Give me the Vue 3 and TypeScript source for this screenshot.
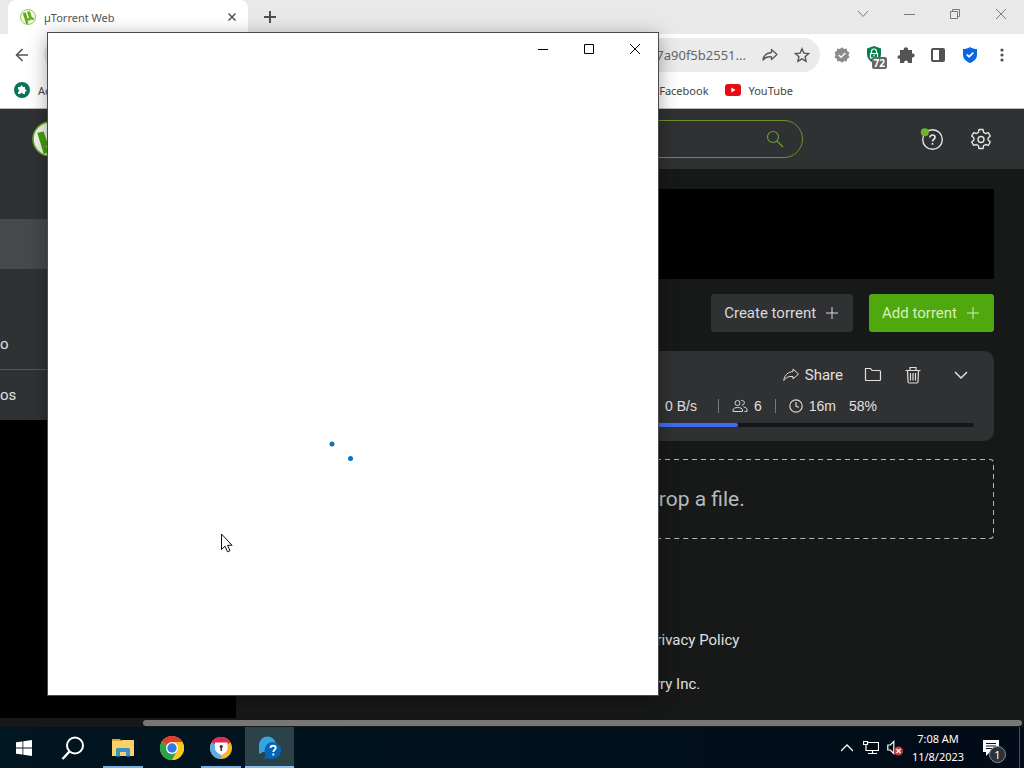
<script setup lang="ts">
import { ref } from 'vue'

interface Task {
  name: string
  label: string
  running?: boolean
  active?: boolean
}

const tasks: Task[] = [
  { name: 'start', label: 'Start' },
  { name: 'search', label: 'Search' },
  { name: 'explorer', label: 'File Explorer', running: true },
  { name: 'chrome', label: 'Google Chrome' },
  { name: 'secure', label: 'Secure browser', running: true },
  { name: 'help', label: 'Help', running: true, active: true },
]

const progress = ref(58)
const query = ref('')
</script>

<template>
  <div class="desktop">
    <div class="browser">
      <header class="tabstrip">
        <div class="tab">
          <svg class="favicon" viewBox="0 0 34 34" aria-hidden="true">
            <circle cx="17" cy="17" r="16" fill="#f3f8e8" stroke="#8cc63f" stroke-width="2" />
            <path d="M6 9l6-2 4 12c1 2 4 1 3-1L15 6l6-1 4 12c1 2 3 2 4 1l1 4c-2 2-5 2-7 0-1 3-5 4-7 2l2 7-5 1z" fill="#62a91d" />
          </svg>
          <span class="tab-title">µTorrent Web</span>
          <button class="bare tab-close" aria-label="Close tab">
            <svg width="10" height="10" viewBox="0 0 10 10"><path d="M1.500 1.500l7 7M8.500 1.500l-7 7" stroke="#555" stroke-width="1.500" /></svg>
          </button>
        </div>
        <button class="bare new-tab" aria-label="New tab">
          <svg width="14" height="14" viewBox="0 0 14 14"><path d="M7 1v12M1 7h12" stroke="#505050" stroke-width="2" /></svg>
        </button>
        <div class="captions">
          <button class="bare caption" aria-label="Search tabs">
            <svg width="12" height="12" viewBox="0 0 12 12" fill="none" stroke="#84757f"><path d="M1 3l5 5.500L11 3" /></svg>
          </button>
          <button class="bare caption" aria-label="Minimize browser">
            <svg width="12" height="12" viewBox="0 0 12 12" fill="none" stroke="#84757f"><path d="M1 6.500h11" /></svg>
          </button>
          <button class="bare caption" aria-label="Restore browser">
            <svg width="12" height="12" viewBox="0 0 12 12" fill="none" stroke="#84757f"><path d="M1.500 3.500h7v7h-7zM3.500 3.500v-2h7v7h-2" /></svg>
          </button>
          <button class="bare caption" aria-label="Close browser">
            <svg width="12" height="12" viewBox="0 0 12 12" fill="none" stroke="#84757f"><path d="M1 1l10 10M11 1L1 11" /></svg>
          </button>
        </div>
      </header>

      <div class="toolbar">
        <button class="bare tool" aria-label="Back">
          <svg width="14" height="14" viewBox="0 0 14 14" fill="none" stroke="#555" stroke-width="1.600"><path d="M13 7H1.500M7.500 1L1.500 7l6 6" /></svg>
        </button>
        <div class="omnibox">
          <span class="url">7a90f5b2551...</span>
          <button class="bare tool" aria-label="Share this page">
            <svg width="16" height="16" viewBox="0 0 16 16" fill="none" stroke="#555" stroke-width="1.300" stroke-linejoin="round"><path d="M9.500 2.500l5.500 5-5.500 5V9.800C5.500 9.500 3 10.500 1 13c.5-4.500 3.500-7 8.500-7.500z" /></svg>
          </button>
          <button class="bare tool" aria-label="Bookmark this page">
            <svg width="16" height="16" viewBox="0 0 16 16" fill="none" stroke="#555" stroke-width="1.400"><path d="M8 1.800l1.900 4.300 4.700.5-3.500 3.100 1 4.600L8 11.900l-4.100 2.400 1-4.600L1.400 6.600l4.700-.5z" /></svg>
          </button>
        </div>
        <div class="extensions">
          <button class="bare tool" aria-label="Verified extension">
            <svg width="16" height="16" viewBox="0 0 16 16"><path d="M8 .3l2.100 1.600 2.600-.4.500 2.600 2.300 1.300L14.400 8l1.100 2.500-2.300 1.300-.5 2.600-2.600-.3L8 15.700l-2.100-1.600-2.600.3-.5-2.600-2.300-1.300L1.600 8 .5 5.400l2.300-1.300.5-2.600 2.600.4z" fill="#8b8b8b" /><path d="M4.800 8l2.300 2.300L11.400 6" fill="none" stroke="#fff" stroke-width="1.500" /></svg>
          </button>
          <button class="bare tool badge-host" aria-label="Privacy extension">
            <svg width="16" height="18" viewBox="0 0 16 18"><path d="M8 0l7 2.500V8c0 5-4 8-7 9.500C5 16 1 13 1 8V2.500z" fill="#087d4c" /><path d="M5.500 7V5.500a2.500 2.500 0 015 0V7M4.500 7.500h7V12h-7z" fill="none" stroke="#fff" stroke-width="1.200" /><path d="M8 8.500v2" stroke="#fff" stroke-width="1.200" /></svg>
            <span class="badge">72</span>
          </button>
          <button class="bare tool" aria-label="Extensions">
            <svg width="18" height="18" viewBox="0 0 18 18"><path d="M3 4h3.800c-1-3.800 5.200-3.800 4.200 0H15v3.600c3.500-.7 3.500 4.500 0 3.800V17h-4c.6-3.500-4.400-3.500-3.800 0H3v-4.200c-3.300.5-3.300-4 0-3.600z" fill="#535353" /></svg>
          </button>
          <button class="bare tool" aria-label="Side panel">
            <svg width="14" height="14" viewBox="0 0 14 14"><rect x="1" y="1" width="12" height="12" rx="1" fill="#fff" stroke="#535353" stroke-width="2" /><path d="M8 1h5v12H8z" fill="#535353" /></svg>
          </button>
          <button class="bare tool" aria-label="Security extension">
            <svg width="16" height="16" viewBox="0 0 16 16"><path d="M8 0c2 1.500 4.500 2 7 2v6c0 4-3.500 6.500-7 8-3.500-1.500-7-4-7-8V2c2.500 0 5-.5 7-2z" fill="#0867e8" /><path d="M4.800 7.500l2.300 2.300 4.200-4.200" fill="none" stroke="#fff" stroke-width="1.800" /></svg>
          </button>
          <button class="bare tool" aria-label="Browser menu">
            <svg width="4" height="14" viewBox="0 0 4 14" fill="#505050"><circle cx="2" cy="2" r="1.600" /><circle cx="2" cy="7" r="1.600" /><circle cx="2" cy="12" r="1.600" /></svg>
          </button>
        </div>
      </div>

      <nav class="bookmarks">
        <a class="bookmark" href="#">
          <svg width="16" height="16" viewBox="0 0 16 16"><circle cx="8" cy="8" r="8" fill="#087555" /><path d="M4 5h2.500c-.3-2 2.500-2 2.200 0H11v2.400c2-.3 2 2.500 0 2.200V12H8.700c.2-1.800-2.400-1.800-2.200 0H4V9.700c1.800.2 1.800-2.500 0-2.300z" fill="#fff" /></svg>
          <span>Ac</span>
        </a>
        <div class="more-bookmarks">
          <a class="bookmark" href="#"><span>Facebook</span></a>
          <a class="bookmark" href="#">
            <svg width="16" height="16" viewBox="0 0 16 16"><rect y="2" width="16" height="12" rx="3" fill="#e60b14" /><path d="M6.300 5.500v5L10.500 8z" fill="#fff" /></svg>
            <span>YouTube</span>
          </a>
        </div>
      </nav>

      <div class="page">
        <aside class="sidebar">
          <div class="brand">
            <svg width="36" height="36" viewBox="0 0 34 34" aria-hidden="true"><circle cx="17" cy="17" r="16" fill="#f3f8ee" stroke="#62a91d" stroke-width="1.500" /><path d="M5 11l6-1 4 12c1 2 4 1 3-1L15 8l5-1 6 16-5 1-1-2c-1 3-5 3-7 1l3 7-5 1z" fill="#4aa010" /></svg>
          </div>
          <nav class="side-nav">
            <a class="side-link selected" href="#" aria-label="Torrents"></a>
            <a class="side-link first" href="#">o</a>
            <a class="side-link" href="#">os</a>
          </nav>
        </aside>

        <main class="main">
          <div class="topbar">
            <label class="search">
              <input v-model="query" type="search" aria-label="Search" />
              <svg width="18" height="18" viewBox="0 0 18 18" fill="none" stroke="#6d9933" stroke-width="1.200"><circle cx="7" cy="7" r="5.500" /><path d="M11 11l6 6" /></svg>
            </label>
            <button class="bare round help" aria-label="Help">
              <svg width="24" height="24" viewBox="0 0 24 24" fill="none" stroke="#e2e3e3" stroke-width="1.400"><circle cx="12.500" cy="12.500" r="9.800" /><path d="M10 10.500c0-3.500 5.200-3.200 5 0-.1 1.800-2.500 1.800-2.500 4M12.500 16v1.700" stroke-width="1.700" /><circle cx="4.800" cy="5.200" r="4" fill="#6cb52c" stroke="none" /></svg>
            </button>
            <button class="bare round" aria-label="Settings">
              <svg width="22" height="22" viewBox="0 0 22 22" fill="none" stroke="#e2e3e3" stroke-width="1.400" stroke-linejoin="round"><circle cx="11" cy="11.500" r="3" /><path d="M9 1.500h4l.6 2.900 2 1.100L18.300 4.600l2 3.500-2.200 2v1.900l2.200 2-2 3.400-2.700-.9-2 1.100-.6 2.900H9l-.6-2.900-2-1.100-2.700.9-2-3.400 2.200-2v-1.900l-2.200-2 2-3.500 2.700.9 2-1.100z" /></svg>
            </button>
          </div>

          <div class="content">
            <div class="banner"></div>
            <div class="actions">
              <button class="action">Create torrent
                <svg width="12" height="12" viewBox="0 0 12 12"><path d="M6 0v12M0 6h12" stroke="currentColor" /></svg>
              </button>
              <button class="action primary">Add torrent
                <svg width="12" height="12" viewBox="0 0 12 12"><path d="M6 0v12M0 6h12" stroke="currentColor" /></svg>
              </button>
            </div>

            <section class="torrent">
              <div class="tools">
                <button class="bare share">
                  <svg width="16" height="14" viewBox="0 0 16 14" fill="none" stroke="#e0e0e0" stroke-linejoin="round"><path d="M10 1l5.500 5-5.500 5V8.500C5.500 8 3 9.500.8 12.500 1.500 7 5 4 10 3.500z" /></svg>
                  Share
                </button>
                <button class="bare icon-tool" aria-label="Open folder">
                  <svg width="18" height="16" viewBox="0 0 18 16" fill="none" stroke="#e0e0e0" stroke-width="1.200"><path d="M1.500 13.500v-12h5l1.500 2h7.500a1 1 0 011 1v8a1 1 0 01-1 1h-13a1 1 0 01-1-1z" /></svg>
                </button>
                <button class="bare icon-tool" aria-label="Delete">
                  <svg width="16" height="18" viewBox="0 0 16 18" fill="none" stroke="#e0e0e0" stroke-width="1.200"><path d="M.5 4.500h15M5 4.500v-3h6v3M2.500 4.500l.5 11c0 1 .5 1.500 1.500 1.500h7c1 0 1.500-.5 1.500-1.500l.5-11M5.500 7v7.500M8 7v7.500M10.500 7v7.500" /></svg>
                </button>
                <button class="bare icon-tool expand" aria-label="Show details">
                  <svg width="14" height="8" viewBox="0 0 14 8" fill="none" stroke="#e0e0e0" stroke-width="1.500"><path d="M1 1l6 6 6-6" /></svg>
                </button>
              </div>
              <div class="stats">
                <span class="speed">0 B/s</span>
                <i class="rule"></i>
                <span class="stat">
                  <svg width="16" height="14" viewBox="0 0 16 14" fill="none" stroke="#d4d4d4"><circle cx="5.500" cy="4" r="2.500" /><path d="M1 12.500V11c0-3.300 9.500-3.300 9.500 0v1.500zM9 1.600c4-1.500 4.500 4.700.8 4.700M11.500 8c2.500.2 3.500 1.200 3.500 3v1.500h-2.500" /></svg>
                  6
                </span>
                <i class="rule"></i>
                <span class="stat">
                  <svg width="14" height="14" viewBox="0 0 14 14" fill="none" stroke="#d4d4d4" stroke-width="1.200"><circle cx="7" cy="7" r="6.200" /><path d="M7 3v4.300l3 1" /></svg>
                  16m
                </span>
                <span>{{ progress }}%</span>
              </div>
              <div class="track" role="progressbar" :aria-valuenow="progress"><div class="fill" :style="{ width: progress + '%' }"></div></div>
            </section>

            <section class="dropzone">
              <svg class="outline" aria-hidden="true"><rect width="100%" height="100%" rx="4" fill="none" stroke="#b4b6b5" stroke-width="2" stroke-dasharray="5 4" /></svg>
              drop a file.
            </section>
            <footer class="footer">
              <a href="#">Privacy Policy</a>
              <span>erry Inc.</span>
            </footer>
          </div>
        </main>
      </div>
      <div class="scroller"><div class="thumb"></div></div>
    </div>

    <footer class="taskbar">
      <button v-for="task in tasks" :key="task.name" class="bare task" :class="{ running: task.running, active: task.active }" :aria-label="task.label">
        <svg v-if="task.name === 'start'" width="16" height="16" viewBox="0 0 16 16" fill="#fff"><path d="M0 2.300l6.500-.9v6.100H0zM7.300 1.300L16 0v7.500H7.300zM0 8.400h6.500v6.200L0 13.700zM7.300 8.400H16V16l-8.700-1.300z" /></svg>
        <svg v-else-if="task.name === 'search'" width="24" height="24" viewBox="0 0 24 24" fill="none" stroke="#fff" stroke-width="2"><circle cx="14" cy="9.500" r="8" /><path d="M8.500 15.500L1.500 23" stroke-width="2.400" /></svg>
        <svg v-else-if="task.name === 'explorer'" width="22" height="20" viewBox="0 0 22 20"><path d="M0 1h8l1.500 2H0z" fill="#d9a33d" /><path d="M0 3h9l1-1h12v16H0z" fill="#f8d16a" /><path d="M4 18.500V11.500q0-1.500 1.500-1.500h11q1.500 0 1.500 1.500v7h-4V14H8v4.500z" fill="#3d8fc6" /></svg>
        <svg v-else-if="task.name === 'chrome'" width="24" height="24" viewBox="0 0 24 24"><circle cx="12" cy="12" r="12" fill="#f9c91e" /><path d="M12 12L1.600 6A12 12 0 0122.400 6H12z" fill="#e33b2e" /><path d="M12 12L1.600 6a12 12 0 0010.400 18l5.200-9z" fill="#2ba24c" /><path d="M12 6h10.400A12 12 0 0112 24l5.200-9z" fill="#f9c91e" /><circle cx="12" cy="12" r="6" fill="#fff" /><circle cx="12" cy="12" r="4.700" fill="#3478e5" /></svg>
        <svg v-else-if="task.name === 'secure'" width="22" height="22" viewBox="0 0 22 22"><circle cx="11" cy="11" r="11" fill="#f5b72b" /><path d="M11 11L1.500 5.500A11 11 0 0120.500 5.500z" fill="#e62558" /><path d="M11 11L1.500 5.500A11 11 0 0011 22z" fill="#58aee8" /><path d="M5 5.500h12.500V11c0 3.500-3 5.500-6.200 7C8 16.500 5 14.500 5 11z" fill="#fff" /><circle cx="11.200" cy="9.500" r="1.600" fill="#333" /><path d="M10.500 10h1.500v4h-1.500z" fill="#333" /></svg>
        <svg v-else width="24" height="24" viewBox="0 0 24 24"><path d="M1 9a8.500 8.500 0 0117 0v7H5l-4 2z" fill="#36a6e2" /><path d="M15 6a8.500 8.500 0 11-1 17c-2 0-3-.5-4-1l-4 1.500 1.500-5A8.500 8.500 0 0115 6z" fill="#0862b5" /><path d="M12.500 12c0-3 5.200-3 5.200 0 0 2-2.400 1.800-2.400 4M15.300 17.500v2" fill="none" stroke="#fff" stroke-width="1.800" /></svg>
      </button>

      <div class="tray">
        <button class="bare tray-icon" aria-label="Show hidden icons">
          <svg width="12" height="8" viewBox="0 0 12 8" fill="none" stroke="#fff" stroke-width="1.300"><path d="M0 7l6-6 6 6" /></svg>
        </button>
        <button class="bare tray-icon" aria-label="Network">
          <svg width="16" height="16" viewBox="0 0 16 16" fill="none" stroke="#fff" stroke-width="1.200"><path d="M5 2.500h10.500v8H5M3 4.500v6h2M.5 1.500h4v3h-4zM9.500 10.500v3M5 13.500h9" /></svg>
        </button>
        <button class="bare tray-icon" aria-label="Volume muted">
          <svg width="16" height="16" viewBox="0 0 16 16" fill="none"><path d="M.8 5h2.500l3.500-3.500v12L3.300 10H.8z" stroke="#fff" stroke-width="1.200" /><circle cx="11.500" cy="11" r="4.500" fill="#c93b3b" /><path d="M9.500 9l4 4M13.500 9l-4 4" stroke="#fff" stroke-width="1.300" /></svg>
        </button>
        <div class="clock"><span>7:08 AM</span><span>11/8/2023</span></div>
        <button class="bare notify" aria-label="Notifications">
          <svg width="18" height="18" viewBox="0 0 18 18"><path d="M1 1h16v12H8l-4 4v-4H1z" fill="#fff" /><path d="M4 4.500h10M4 7h10M4 9.500h6" stroke="#06111b" /></svg>
          <span class="count">1</span>
        </button>
      </div>
    </footer>

    <section class="popup" aria-label="Loading window">
      <header class="popup-bar">
        <button class="bare caption" aria-label="Minimize"><svg width="12" height="12" viewBox="0 0 12 12" fill="none" stroke="#000"><path d="M1 6.500h10" /></svg></button>
        <button class="bare caption" aria-label="Maximize"><svg width="12" height="12" viewBox="0 0 12 12" fill="none" stroke="#000"><path d="M1.500 1.500h9v9h-9z" /></svg></button>
        <button class="bare caption" aria-label="Close"><svg width="12" height="12" viewBox="0 0 12 12" fill="none" stroke="#000"><path d="M1 1l10 10M11 1L1 11" /></svg></button>
      </header>
      <svg class="spinner" width="24" height="22" viewBox="0 0 24 22" fill="#0f72bd"><circle cx="3" cy="3" r="2.500" /><circle cx="21.500" cy="17.500" r="2.500" /></svg>
    </section>
    <svg class="cursor" width="14" height="20" viewBox="0 0 14 20"><path d="M1.500 1v15.500l3.500-3.300 2.500 5.600 2.500-1.100-2.400-5.400h4.500z" fill="#fff" stroke="#111" /></svg>
  </div>
</template>

<style>
body {
  margin: 0;
}
</style>

<style scoped>
* {
  box-sizing: border-box;
}
.desktop {
  position: relative;
  display: flex;
  flex-direction: column;
  min-height: 100vh;
  overflow: hidden;
  font-family: "Noto Sans", "Open Sans", sans-serif;
  font-size: 11px;
  color: #444;
}
svg {
  display: block;
  flex: none;
}
a {
  color: inherit;
  text-decoration: none;
}
.bare {
  display: flex;
  align-items: center;
  justify-content: center;
  padding: 0;
  border: 0;
  background: none;
  font: inherit;
  color: inherit;
}
.browser {
  flex: 1;
  display: flex;
  flex-direction: column;
  background: #fff;
}
.tabstrip {
  display: flex;
  height: 34px;
  background: #e9e9e9;
}
.tab {
  display: flex;
  align-items: center;
  gap: 8px;
  width: 240px;
  margin-left: 8px;
  padding: 0 10px 0 12px;
  background: #fff;
  border-radius: 8px 8px 0 0;
}
.favicon {
  width: 16px;
  height: 16px;
}
.tab-title {
  flex: 1;
  color: #555;
}
.tab-close {
  width: 12px;
  height: 12px;
}
.new-tab {
  width: 44px;
}
.captions {
  display: flex;
  height: 28px;
  margin-left: auto;
}
.caption {
  width: 46px;
}
.toolbar {
  display: flex;
  align-items: center;
  gap: 6px;
  height: 42px;
  padding: 0 6px;
}
.tool {
  width: 32px;
  height: 32px;
}
.omnibox {
  flex: 1;
  display: flex;
  align-items: center;
  justify-content: flex-end;
  height: 34px;
  padding-right: 2px;
  border-radius: 17px;
  background: #ebebeb;
}
.url {
  margin-right: 8px;
  font-size: 13px;
  color: #666;
}
.extensions {
  display: flex;
}
.badge-host {
  position: relative;
}
.badge {
  position: absolute;
  right: 3px;
  bottom: 2px;
  padding: 0 2px;
  border-radius: 2px;
  background: #686868;
  color: #fff;
  font-size: 10px;
  font-weight: 700;
  line-height: 12px;
}
.bookmarks {
  display: flex;
  justify-content: space-between;
  height: 33px;
  padding: 0 14px;
  border-bottom: 1px solid #bbb;
}
.bookmark {
  display: flex;
  align-items: center;
  gap: 8px;
  height: 28px;
}
.more-bookmarks {
  display: flex;
  gap: 16px;
  padding-right: 217px;
}
.page {
  flex: 1;
  display: grid;
  grid-template-columns: 236px 1fr;
  background: #171918;
  color: #e0e0e0;
  font-family: Roboto, "Liberation Sans", sans-serif;
  font-size: 15px;
}
.sidebar {
  background: #000;
}
.brand {
  height: 110px;
  padding: 12px 32px;
  background: #303133;
}
.side-nav {
  background: #303133;
}
.side-link {
  display: flex;
  align-items: center;
  height: 50px;
}
.side-link.selected {
  background: #45494b;
}
.side-link.first {
  height: 101px;
  padding-top: 50px;
  border-bottom: 1px solid #555759;
}
.topbar {
  display: flex;
  align-items: center;
  height: 60px;
  padding: 0 27px 0 20px;
  background: #303133;
}
.search {
  flex: 1;
  display: flex;
  align-items: center;
  height: 38px;
  margin-right: 113px;
  padding: 0 18px;
  border: 1px solid #6d9428;
  border-radius: 19px;
}
.search input {
  flex: 1;
  min-width: 0;
  border: 0;
  outline: 0;
  background: transparent;
  color: inherit;
  font: inherit;
}
.round {
  width: 32px;
  height: 32px;
}
.help {
  margin-right: 17px;
}
.content {
  padding: 20px 30px 20px 20px;
}
.banner {
  height: 90px;
  background: #000;
}
.actions {
  display: flex;
  justify-content: flex-end;
  gap: 16px;
  margin: 15px 0 19px;
}
.action {
  display: flex;
  align-items: center;
  gap: 10px;
  height: 38px;
  padding: 0 15px 0 13px;
  border: 0;
  border-radius: 3px;
  background: #303133;
  color: #dadada;
  font: inherit;
}
.primary {
  background: #50a80f;
  color: #d5f0bd;
}
.torrent {
  padding: 10px 20px 14px 156px;
  border-radius: 10px;
  background: #303133;
}
.tools {
  display: flex;
  justify-content: flex-end;
  align-items: center;
  gap: 8px;
  height: 28px;
}
.share {
  gap: 6px;
  margin-right: 6px;
}
.icon-tool {
  width: 32px;
  height: 28px;
}
.expand {
  width: 37px;
  padding-left: 10px;
}
.stats {
  display: flex;
  justify-content: flex-end;
  align-items: center;
  gap: 13px;
  height: 34px;
  padding-right: 97px;
  font-family: "Liberation Sans", sans-serif;
  font-size: 14px;
}
.stat {
  display: flex;
  align-items: center;
  gap: 6px;
}
.speed {
  padding-right: 8px;
}
.rule {
  width: 1px;
  height: 14px;
  background: #77797a;
}
.track {
  height: 4px;
  border-radius: 2px;
  background: #151617;
}
.fill {
  height: 100%;
  border-radius: 2px;
  background: #3e6df2;
}
.dropzone {
  position: relative;
  display: flex;
  align-items: center;
  height: 80px;
  margin-top: 18px;
  padding-left: 391px;
  color: #bababa;
  font-size: 21px;
}
.outline {
  position: absolute;
  inset: 0;
  width: 100%;
  height: 100%;
  border-radius: 4px;
}
.footer {
  display: flex;
  flex-direction: column;
  gap: 24px;
  padding: 91px 0 0 391px;
  line-height: 20px;
}
.scroller {
  height: 9px;
  padding: 2px 2px 1px 143px;
  background: #171918;
}
.thumb {
  height: 6px;
  border-radius: 3px;
  background: #777875;
}
.taskbar {
  display: flex;
  height: 41px;
  background: linear-gradient(90deg, #001621, #020b18);
  color: #fff;
}
.task {
  width: 49px;
}
.task:nth-child(-n + 2) {
  padding-right: 2px;
}
.running {
  background: linear-gradient(#78ade0, #78ade0) bottom / 40px 2px no-repeat;
}
.active {
  background: linear-gradient(#8abdec, #8abdec) bottom / 100% 2px no-repeat #2c4249;
}
.tray {
  display: flex;
  margin-left: auto;
  padding-right: 4px;
}
.tray-icon {
  width: 24px;
}
.clock {
  display: flex;
  flex-direction: column;
  justify-content: center;
  width: 62px;
  text-align: center;
  line-height: 18px;
}
.notify {
  position: relative;
  width: 51px;
  padding-right: 6px;
  border-right: 1px solid #46525c;
}
.count {
  position: absolute;
  right: 13px;
  bottom: 5px;
  width: 17px;
  height: 17px;
  border: 1px solid #87909a;
  border-radius: 50%;
  background: #2b323a;
  line-height: 15px;
}
.popup {
  position: absolute;
  left: 47px;
  top: 32px;
  width: 612px;
  height: 664px;
  border: 1px solid #4b4b4b;
  background: #fff;
  box-shadow: 0 4px 18px rgba(0, 0, 0, 0.35);
}
.popup-bar {
  display: flex;
  justify-content: flex-end;
  height: 32px;
}
.spinner {
  position: absolute;
  left: 281px;
  top: 408px;
}
.cursor {
  position: absolute;
  left: 220px;
  top: 533px;
}
</style>
